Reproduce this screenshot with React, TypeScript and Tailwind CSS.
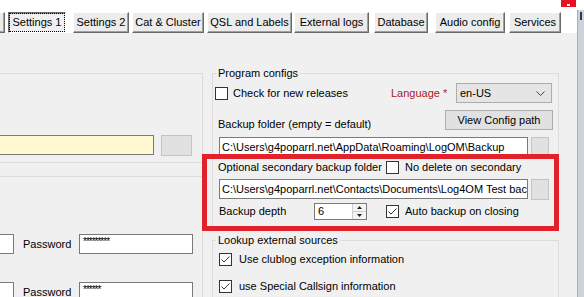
import React from "react";

const tabs = [
  { label: "", cls: "w-[5px] border-l-0" },
  { label: "Settings 1", cls: "ml-[3px] w-[58px]", active: true },
  { label: "Settings 2", cls: "ml-[7px] w-[56px]" },
  { label: "Cat & Cluster", cls: "ml-[3px] w-[72px]" },
  { label: "QSL and Labels", cls: "ml-[3px] w-[85px]" },
  { label: "External logs", cls: "ml-[2px] w-[75px]" },
  { label: "Database", cls: "ml-[5px] w-[54px]" },
  { label: "Audio config", cls: "ml-[7px] w-[70px]" },
  { label: "Services", cls: "ml-[4px] w-[52px]" },
];

function Check({ checked = false }: { checked?: boolean }) {
  return (
    <span className="flex h-[13px] w-[13px] shrink-0 items-center justify-center border border-[#333333] bg-white">
      {checked && (
        <svg width="11" height="11" viewBox="0 0 11 11">
          <polyline points="1.5,5.5 4,8 9.5,2.5" fill="none" stroke="#333" strokeWidth="1" />
        </svg>
      )}
    </span>
  );
}

function TextBox({ text, cls, yellow = false }: { text: string; cls: string; yellow?: boolean }) {
  return (
    <div
      className={`flex h-[20px] items-center overflow-hidden whitespace-nowrap border border-[#7a7a7a] pl-[2px] ${
        yellow ? "bg-[#fff9d2]" : "bg-white"
      } ${cls}`}
    >
      {text}
    </div>
  );
}

function SmallBtn({ cls }: { cls: string }) {
  return <div className={`h-[21px] border border-[#c4c4c4] bg-[#e1e1e1] ${cls}`} />;
}

function PasswordRow({ stars, cls }: { stars: string; cls: string }) {
  return (
    <div className={`flex h-[20px] items-center ${cls}`}>
      <div className="h-[20px] w-[14px] border border-l-0 border-[#7a7a7a] bg-white" />
      <span className="w-[65px] pl-[9px]">Password</span>
      <div className="h-[20px] w-[114px] border border-[#7a7a7a] bg-white pl-[3px] pt-[2px] text-[10px] leading-[10px] tracking-[-1px]">
        {stars}
      </div>
    </div>
  );
}

export default function App() {
  return (
    <div className="relative flex h-[297px] w-[584px] overflow-hidden bg-[#f0f0f0] font-['Liberation_Sans',Arial,sans-serif] text-[11px] leading-[13px] text-black">
      <div className="flex w-[577px] flex-col">
        {/* tab strip */}
        <div className="flex h-[33px] shrink-0 items-start bg-white pt-[12px]">
          {tabs.map((t, i) => (
            <div
              key={i}
              className={`flex h-[21px] shrink-0 items-center justify-center whitespace-nowrap border text-[11px] ${t.cls} ${
                t.active
                  ? "border-t-[#696969] border-l-[#696969] border-r-white border-b-white bg-[#f0f0f0] shadow-[inset_1px_1px_0_#a0a0a0] outline-1 outline-dotted outline-black -outline-offset-2"
                  : "border-t-white border-l-white border-r-[#696969] border-b-[#696969] bg-[#ececec] shadow-[inset_-1px_-1px_0_#a0a0a0]"
              }`}
            >
              {t.label}
            </div>
          ))}
        </div>

        <div className="flex">
          {/* left column */}
          <div className="w-[203px] shrink-0">
            <div className="mt-[40px] h-[90px] border-y border-r border-[#dcdcdc]">
              <div className="mt-[61px] flex">
                <TextBox text="" cls="w-[154px] border-l-0" yellow />
                <SmallBtn cls="ml-[7px] w-[31px] border-[#adadad]" />
              </div>
            </div>
            <div className="mt-[13px] h-[200px] border-t border-r border-[#dcdcdc]">
              <PasswordRow stars="*********" cls="mt-[57px]" />
              <PasswordRow stars="******" cls="mt-[28px]" />
            </div>
          </div>

          {/* right column */}
          <div className="ml-[9px] w-[347px] shrink-0">
            <fieldset className="mt-[33px] h-[163px] border border-[#dcdcdc]">
              <legend className="ml-[3px] px-[2px] leading-[15px]">Program configs</legend>
              <div className="mt-[2px] flex h-[20px] items-center">
                <div className="flex w-[178px] items-center pl-[2px]">
                  <Check />
                  <span className="ml-[5px]">Check for new releases</span>
                </div>
                <span className="w-[65px] text-[#a51d1d]">Language *</span>
                <div className="flex h-[20px] w-[96px] items-center justify-between border border-[#adadad] bg-[#e5e5e5] pl-[3px] pr-[6px]">
                  <span>en-US</span>
                  <svg width="9" height="5" viewBox="0 0 9 5">
                    <polyline points="0.5,0.5 4.5,4.5 8.5,0.5" fill="none" stroke="#444" strokeWidth="1" />
                  </svg>
                </div>
              </div>
              <div className="mt-[7px] flex h-[20px] items-end">
                <span className="mb-[-1px] pl-[5px]">Backup folder (empty = default)</span>
                <div className="ml-auto mr-[5px] flex h-[20px] w-[108px] items-center justify-center border border-[#adadad] bg-[#e1e1e1]">
                  View Config path
                </div>
              </div>
              <div className="mt-[7px] flex h-[20px]">
                <TextBox text="C:\Users\g4poparrl.net\AppData\Roaming\LogOM\Backup" cls="ml-[6px] w-[309px]" />
                <SmallBtn cls="ml-[3px] w-[18px]" />
              </div>
              <div className="mt-[3px] flex h-[14px] items-center">
                <span className="w-[173px] pl-[5px]">Optional secondary backup folder</span>
                <Check />
                <span className="ml-[6px]">No delete on secondary</span>
              </div>
              <div className="mt-[5px] flex h-[20px]">
                <TextBox
                  text="C:\Users\g4poparrl.net\Contacts\Documents\Log4OM Test backup"
                  cls="ml-[6px] w-[309px]"
                />
                <SmallBtn cls="ml-[3px] w-[18px]" />
              </div>
              <div className="mt-[4px] flex h-[17px] items-center">
                <span className="w-[101px] pl-[6px]">Backup depth</span>
                <div className="flex h-[17px] w-[53px] border border-[#7a7a7a] bg-white">
                  <span className="flex-1 pl-[3px] leading-[15px]">6</span>
                  <div className="flex w-[14px] flex-col border-l border-[#cfcfcf] bg-[#f4f4f4]">
                    <div className="flex flex-1 items-center justify-center border-b border-[#cfcfcf]">
                      <svg width="5" height="3" viewBox="0 0 5 3">
                        <polygon points="0,3 2.5,0 5,3" fill="#222" />
                      </svg>
                    </div>
                    <div className="flex flex-1 items-center justify-center">
                      <svg width="5" height="3" viewBox="0 0 5 3">
                        <polygon points="0,0 2.5,3 5,0" fill="#222" />
                      </svg>
                    </div>
                  </div>
                </div>
                <span className="ml-[19px]">
                  <Check checked />
                </span>
                <span className="ml-[6px]">Auto backup on closing</span>
              </div>
            </fieldset>

            <fieldset className="mt-[4px] h-[80px] border border-[#dcdcdc]">
              <legend className="ml-[3px] px-[2px] leading-[15px]">Lookup external sources</legend>
              <div className="mt-[4px] flex h-[14px] items-center pl-[6px]">
                <Check checked />
                <span className="ml-[7px]">Use clublog exception information</span>
              </div>
              <div className="mt-[13px] flex h-[14px] items-center pl-[6px]">
                <Check checked />
                <span className="ml-[7px]">use Special Callsign information</span>
              </div>
            </fieldset>
          </div>
        </div>
      </div>

      {/* neighbouring window edge */}
      <div className="flex w-[7px] flex-col bg-white">
        <div className="h-[10px] shrink-0" />
        <div className="flex-1 border-l border-[#a9aeb6] bg-[#cdd3db]">
          <div className="ml-[2px] mt-[2px] h-[8px] w-[2px] bg-[#2b3a58]" />
        </div>
      </div>

      {/* close button of the window behind */}
      <div className="absolute left-[561px] top-0 flex h-[7px] w-[15px] items-end justify-center bg-[#e81123]">
        <div className="mb-[1px] h-[2px] w-[3px] bg-white" />
      </div>

      {/* red highlight annotation */}
      <div className="pointer-events-none absolute left-[202px] top-[154px] h-[77px] w-[357px] border-[5px] border-[#e3212b]" />
    </div>
  );
}
